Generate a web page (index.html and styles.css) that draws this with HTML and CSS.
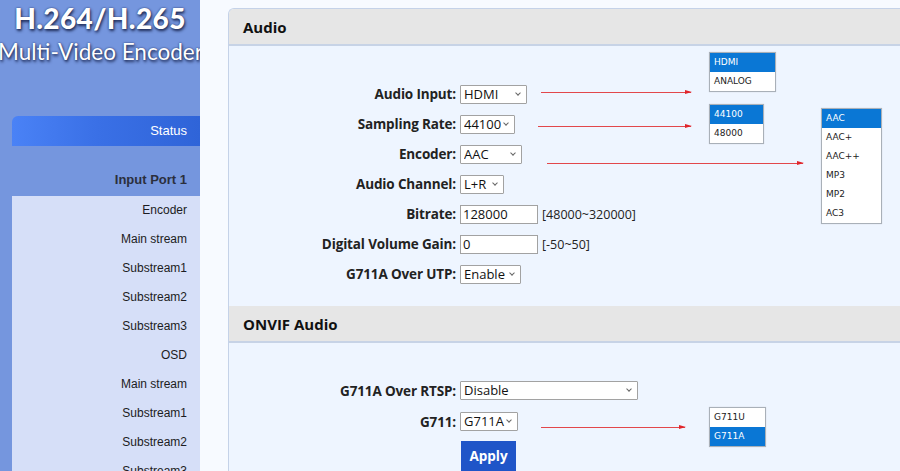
FILE: index.html
```html
<!DOCTYPE html>
<html>
<head>
<meta charset="utf-8">
<link rel="stylesheet" href="styles.css">
</head>
<body>
<div class="page">
  <aside class="sidebar">
    <div class="logo">
      <div class="logo-top">H.264/H.265</div>
      <div class="logo-sub">Multi-Video Encoder</div>
    </div>
    <div class="status">Status</div>
    <div class="port">Input Port 1</div>
    <ul class="menu">
      <li>Encoder</li>
      <li>Main stream</li>
      <li>Substream1</li>
      <li>Substream2</li>
      <li>Substream3</li>
      <li>OSD</li>
      <li>Main stream</li>
      <li>Substream1</li>
      <li>Substream2</li>
      <li>Substream3</li>
    </ul>
  </aside>
  <main class="main">
    <section class="panel">
      <h2 class="phead">Audio</h2>
      <div class="pbody audio-body">
        <div class="form">
          <label>Audio Input:</label>
          <div class="ctrl"><span class="sel w67"><select><option>HDMI</option></select></span></div>
          <label>Sampling Rate:</label>
          <div class="ctrl"><span class="sel w55"><select><option>44100</option></select></span></div>
          <label>Encoder:</label>
          <div class="ctrl"><span class="sel w62"><select><option>AAC</option></select></span></div>
          <label>Audio Channel:</label>
          <div class="ctrl"><span class="sel w44"><select><option>L+R</option></select></span></div>
          <label>Bitrate:</label>
          <div class="ctrl"><input class="txt" type="text" value="128000"><span class="hint">[48000~320000]</span></div>
          <label>Digital Volume Gain:</label>
          <div class="ctrl"><input class="txt" type="text" value="0"><span class="hint">[-50~50]</span></div>
          <label>G711A Over UTP:</label>
          <div class="ctrl"><span class="sel w61"><select><option>Enable</option></select></span></div>
        </div>
      </div>
      <h2 class="phead">ONVIF Audio</h2>
      <div class="pbody onvif-body">
        <div class="form">
          <label>G711A Over RTSP:</label>
          <div class="ctrl"><span class="sel w178"><select><option>Disable</option></select></span></div>
          <label>G711:</label>
          <div class="ctrl"><span class="sel w58"><select><option>G711A</option></select></span></div>
          <span></span>
          <div class="ctrl btnrow"><button class="apply">Apply</button></div>
        </div>
      </div>
    </section>
  </main>

  <div class="arrow" style="left:541px;top:92px;width:150px"></div>
  <div class="arrow" style="left:538px;top:126px;width:153px"></div>
  <div class="arrow" style="left:547px;top:163px;width:256px"></div>
  <div class="arrow" style="left:541px;top:427px;width:144px"></div>

  <ul class="pop" style="left:709px;top:52px;width:67px">
    <li class="on">HDMI</li><li>ANALOG</li>
  </ul>
  <ul class="pop" style="left:709px;top:104px;width:55px">
    <li class="on">44100</li><li>48000</li>
  </ul>
  <ul class="pop" style="left:821px;top:108px;width:61px">
    <li class="on">AAC</li><li>AAC+</li><li>AAC++</li><li>MP3</li><li>MP2</li><li>AC3</li>
  </ul>
  <ul class="pop" style="left:709px;top:407px;width:57px">
    <li>G711U</li><li class="on">G711A</li>
  </ul>
</div>
</body>
</html>
```
FILE: styles.css
```css
* { box-sizing: border-box; }
html, body { margin: 0; padding: 0; }
body {
  width: 900px;
  height: 471px;
  overflow: hidden;
  background: #f7faff;
  font-family: "Liberation Sans", Arial, sans-serif;
}
.page {
  position: relative;
  display: flex;
  height: 471px;
}
.sidebar {
  width: 200px;
  flex: none;
  background: #7596de;
  overflow: hidden;
  display: flex;
  flex-direction: column;
  align-items: stretch;
}
.sidebar > * { flex: none; }
.logo {
  height: 116px;
  color: #fff;
  text-shadow: 1px 2px 3px #1d2a55, 0 0 2px #2a3a70;
}
.logo-top {
  font-family: Lato, "Open Sans", sans-serif;
  font-weight: 900;
  font-size: 28px;
  line-height: 32px;
  padding-top: 2px;
  text-align: center;
  letter-spacing: 0.4px;
}
.logo-sub {
  font-family: Lato, "Open Sans", sans-serif;
  font-weight: 400;
  font-size: 22.5px;
  line-height: 30px;
  white-space: nowrap;
  margin-left: -2px;
  margin-top: 3px;
}
.status {
  margin-left: 12px;
  height: 30px;
  border-top-left-radius: 6px;
  background: linear-gradient(90deg, #4a82f6 0%, #3a70e6 45%, #2f64d8 100%);
  color: #fff;
  font-size: 13px;
  line-height: 30px;
  text-align: right;
  padding-right: 13px;
}
.port {
  margin-left: 12px;
  height: 50px;
  padding-top: 26px;
  padding-right: 13px;
  text-align: right;
  font-weight: bold;
  font-size: 13px;
  color: #2b2f3d;
  line-height: 16px;
}
.menu {
  list-style: none;
  margin: 0 0 0 12px;
  padding: 0;
  flex: 1 0 auto;
  background: #d6dff8;
}
.menu li {
  height: 29px;
  line-height: 29px;
  text-align: right;
  padding-right: 13px;
  font-size: 12px;
  color: #1c1c22;
}

.main {
  flex: 1;
  padding-left: 28px;
  padding-top: 8px;
  margin-right: -30px;
}
.panel {
  border: 1px solid #c5d2e8;
  border-right: none;
  border-top-left-radius: 6px;
  background: #eef5ff;
  overflow: hidden;
  height: 480px;
}
.phead {
  margin: 0;
  height: 37px;
  background: #e6e6e6;
  border-bottom: 2px solid #c7d3e6;
  font-family: "Open Sans", "Noto Sans", sans-serif;
  font-weight: bold;
  font-size: 15px;
  line-height: 36px;
  padding-left: 14px;
  color: #111;
}
.audio-body {
  padding-top: 33px;
  padding-bottom: 17px;
}
.onvif-body {
  padding-top: 32px;
}
.form {
  display: grid;
  grid-template-columns: 227px auto;
  column-gap: 4px;
  grid-auto-rows: 30px;
  align-items: center;
}
.onvif-body .form { grid-auto-rows: 31px; }
.form label {
  text-align: right;
  font-family: "Open Sans", "Noto Sans", sans-serif;
  font-weight: bold;
  font-size: 13.5px;
  color: #222;
  white-space: nowrap;
  letter-spacing: -0.15px;
}
.ctrl {
  display: flex;
  align-items: center;
}
.btnrow { align-self: start; padding-top: 4px; }
.sel {
  position: relative;
  display: inline-block;
  height: 19px;
}
.sel select {
  -webkit-appearance: none;
  appearance: none;
  width: 100%;
  height: 19px;
  border: 1px solid #a2a2a2;
  border-radius: 1px;
  background: #fff;
  font-family: "Open Sans", "Noto Sans", sans-serif;
  font-size: 13px;
  color: #111;
  padding: 0 0 0 3px;
  line-height: 17px;
  outline: none;
}
.sel::after {
  content: "";
  position: absolute;
  right: 7px;
  top: 6px;
  width: 3px;
  height: 3px;
  border-right: 1px solid #666;
  border-bottom: 1px solid #666;
  transform: rotate(45deg);
  pointer-events: none;
}
.w67 { width: 67px; }
.w55 { width: 55px; }
.w62 { width: 62px; }
.w44 { width: 44px; }
.w61 { width: 61px; }
.w58 { width: 58px; }
.w178 { width: 178px; }
.txt {
  width: 78px;
  height: 19px;
  border: 1px solid #a2a2a2;
  background: #fff;
  font-family: "Open Sans", "Noto Sans", sans-serif;
  font-size: 13px;
  padding: 0 0 0 2px;
  color: #111;
  outline: none;
}
.hint {
  margin-left: 4px;
  font-family: "Open Sans", "Noto Sans", sans-serif;
  font-size: 12.5px;
  color: #222;
}
.apply {
  width: 55px;
  height: 32px;
  margin-left: 1px;
  border: none;
  background: #1f55c8;
  color: #fff;
  font-family: "Open Sans", "Noto Sans", sans-serif;
  font-weight: bold;
  font-size: 13.5px;
  padding: 0;
  padding-bottom: 2px;
}

.arrow {
  position: absolute;
  height: 1px;
  background: #e2474b;
}
.arrow::after {
  content: "";
  position: absolute;
  right: -1px;
  top: -2px;
  border-left: 7px solid #e0252b;
  border-top: 2.5px solid transparent;
  border-bottom: 2.5px solid transparent;
}
.pop {
  position: absolute;
  margin: 0;
  padding: 0;
  list-style: none;
  background: #fff;
  border: 1px solid #a9b0b8;
  box-shadow: 0 0 1px #c8ccd2;
}
.pop li {
  height: 19px;
  line-height: 19px;
  padding-left: 4px;
  font-family: "DejaVu Sans", "Noto Sans", sans-serif;
  font-size: 9px;
  color: #222;
}
.pop li.on {
  background: #0a77d5;
  color: #fff;
}
```
